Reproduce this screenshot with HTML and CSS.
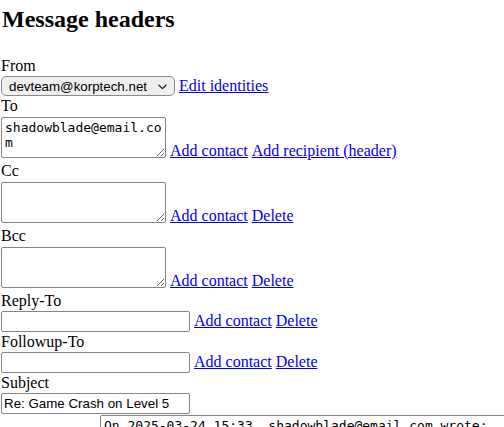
FILE: index.html
```html
<!DOCTYPE html>
<html lang="en">
<head>
<meta charset="utf-8">
<title>Message headers</title>
<link rel="stylesheet" href="styles.css">
</head>
<body>
<main class="page">
  <h1 class="title">Message headers</h1>

  <div class="field">
    <label class="label" for="from">From</label>
    <div class="row row-center">
      <span class="select-wrap">
        <select id="from" class="select"><option>devteam@korptech.net</option></select>
        <svg class="chevron" width="9" height="6" viewBox="0 0 9 6"><path d="M1 1.2 L4.5 4.6 L8 1.2" fill="none" stroke="#222" stroke-width="1.3" stroke-linecap="round" stroke-linejoin="round"/></svg>
      </span>
      <a class="link" href="#">Edit identities</a>
    </div>
  </div>

  <div class="field">
    <label class="label" for="to">To</label>
    <div class="row row-area">
      <textarea id="to" class="area">shadowblade@email.com</textarea>
      <a class="link" href="#">Add contact</a>
      <a class="link" href="#">Add recipient (header)</a>
    </div>
  </div>

  <div class="field">
    <label class="label" for="cc">Cc</label>
    <div class="row row-area">
      <textarea id="cc" class="area"></textarea>
      <a class="link" href="#">Add contact</a>
      <a class="link" href="#">Delete</a>
    </div>
  </div>

  <div class="field">
    <label class="label" for="bcc">Bcc</label>
    <div class="row row-area">
      <textarea id="bcc" class="area"></textarea>
      <a class="link" href="#">Add contact</a>
      <a class="link" href="#">Delete</a>
    </div>
  </div>

  <div class="field">
    <label class="label" for="replyto">Reply-To</label>
    <div class="row row-input">
      <input id="replyto" class="input" type="text">
      <a class="link" href="#">Add contact</a>
      <a class="link" href="#">Delete</a>
    </div>
  </div>

  <div class="field">
    <label class="label" for="followup">Followup-To</label>
    <div class="row row-input">
      <input id="followup" class="input" type="text">
      <a class="link" href="#">Add contact</a>
      <a class="link" href="#">Delete</a>
    </div>
  </div>

  <div class="field">
    <label class="label" for="subject">Subject</label>
    <div class="row row-input">
      <input id="subject" class="input" type="text" value="Re: Game Crash on Level 5">
    </div>
  </div>

  <div class="body-row">
    <textarea class="body-area">On 2025-03-24 15:33, shadowblade@email.com wrote:</textarea>
  </div>
</main>
</body>
</html>
```

FILE: styles.css
```css
html, body {
  margin: 0;
  padding: 0;
  overflow: hidden;
  background: #fff;
}

body {
  font-family: "Liberation Serif", "Times New Roman", serif;
  font-size: 16px;
  color: #000;
}

.page {
  padding: 0 0 0 1px;
}

.title {
  font-size: 24px;
  font-weight: bold;
  line-height: 28px;
  margin: 5px 0 24px 1px;
}

.label {
  display: block;
  line-height: 18px;
}

.row {
  display: flex;
  gap: 4px;
}

.row-center {
  align-items: center;
  padding: 1px 0;
}

.row-area {
  align-items: flex-end;
  padding: 2px 0 4px;
}

.row-area .link {
  margin-bottom: -1.5px;
}

.row-input {
  align-items: baseline;
  padding: 1px 0;
}

.link {
  color: #0000ee;
  text-decoration: underline;
  line-height: 18px;
  white-space: nowrap;
}

.select-wrap {
  position: relative;
  display: inline-flex;
}

.select {
  appearance: none;
  -webkit-appearance: none;
  box-sizing: border-box;
  width: 174px;
  height: 20px;
  margin: 0;
  padding: 0 18px 0 7px;
  border: 1px solid #8a8a8a;
  border-radius: 5px;
  background: #efefef;
  font-family: "Liberation Sans", Arial, sans-serif;
  font-size: 13.33px;
  color: #000;
}

.chevron {
  position: absolute;
  right: 8px;
  top: 8px;
  pointer-events: none;
}

.area {
  box-sizing: border-box;
  width: 165px;
  height: 41px;
  margin: 0;
  padding: 2px 3px;
  border: 1px solid #858585;
  border-radius: 2px;
  font-family: "DejaVu Sans Mono", Menlo, monospace;
  font-size: 13px;
  line-height: 15px;
  color: #000;
  background: #fff;
  overflow: hidden;
}

.input {
  box-sizing: border-box;
  width: 189px;
  height: 21px;
  margin: 0;
  padding: 1px 2px;
  border: 1px solid #858585;
  border-radius: 2px;
  font-family: "Liberation Sans", Arial, sans-serif;
  font-size: 13.33px;
  color: #000;
  background: #fff;
}

.body-row {
  padding-left: 99px;
}

.body-area {
  box-sizing: border-box;
  display: block;
  width: 620px;
  height: 200px;
  margin: 0;
  padding: 2px 3px;
  border: 1px solid #858585;
  border-radius: 2px;
  font-family: "DejaVu Sans Mono", Menlo, monospace;
  font-size: 13px;
  line-height: 15px;
  color: #000;
  background: #fff;
  resize: both;
}
```
